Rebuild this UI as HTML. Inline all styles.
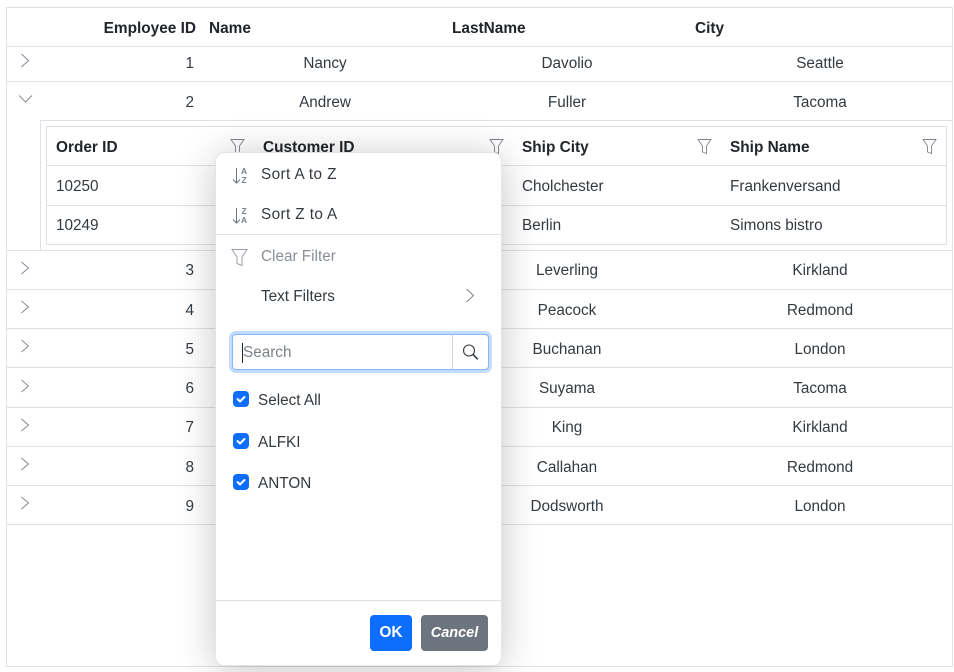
<!DOCTYPE html>
<html><head><meta charset="utf-8">
<style>
html,body{margin:0;padding:0;background:#fff}
body{width:954px;height:672px;position:relative;overflow:hidden;font-family:"Liberation Sans",sans-serif;font-size:15.3px;color:#333a40}
.t{position:absolute;white-space:nowrap;line-height:20px;height:20px;margin-top:1px}
.b{font-weight:bold;color:#212529;font-size:15.4px}
.c{transform:translateX(-50%)}
.r{transform:translateX(-100%)}
.h{position:absolute;height:1px;background:#dee2e6}
.v{position:absolute;width:1px;background:#dee2e6}
svg{position:absolute;overflow:visible}
#pop{position:absolute;left:216px;top:153px;width:285px;height:512px;background:#fff;border-radius:8px;box-shadow:0 0 0 1px #e3e5e8,0 4px 40px rgba(0,0,0,.24)}
.ck{position:absolute;left:233px;width:16px;height:16px;border-radius:4px;background:#0d6efd}
.ic{font-size:8.5px!important;line-height:8px!important;height:8px!important;font-weight:bold;color:#7a8188;margin:0}
</style></head><body>
<div style="position:absolute;left:6px;top:7px;width:947px;height:660px;border:1px solid #dee2e6;box-sizing:border-box"></div>
<div class="h" style="left:7px;width:945px;top:46px"></div>
<div class="h" style="left:7px;width:945px;top:81px"></div>
<div class="h" style="left:40px;width:912px;top:120px"></div>
<div class="h" style="left:7px;width:945px;top:250px"></div>
<div class="h" style="left:7px;width:945px;top:289px"></div>
<div class="h" style="left:7px;width:945px;top:328px"></div>
<div class="h" style="left:7px;width:945px;top:367px"></div>
<div class="h" style="left:7px;width:945px;top:407px"></div>
<div class="h" style="left:7px;width:945px;top:446px"></div>
<div class="h" style="left:7px;width:945px;top:485px"></div>
<div class="h" style="left:7px;width:945px;top:524px"></div>
<div class="v" style="left:40px;top:120px;height:130px"></div>
<div style="position:absolute;left:46px;top:126px;width:901px;height:119px;border:1px solid #dee2e6;box-sizing:border-box"></div>
<div class="h" style="left:47px;width:899px;top:165px"></div>
<div class="h" style="left:47px;width:899px;top:205px"></div>

<span class="t b r" style="left:196px;top:18px">Employee ID</span>
<span class="t b" style="left:209px;top:18px">Name</span>
<span class="t b" style="left:452px;top:18px">LastName</span>
<span class="t b" style="left:695px;top:18px">City</span>

<span class="t r" style="left:194px;top:53px">1</span><span class="t c" style="left:325px;top:53px">Nancy</span><span class="t c" style="left:567px;top:53px">Davolio</span><span class="t c" style="left:820px;top:53px">Seattle</span>
<span class="t r" style="left:194px;top:92px">2</span><span class="t c" style="left:325px;top:92px">Andrew</span><span class="t c" style="left:567px;top:92px">Fuller</span><span class="t c" style="left:820px;top:92px">Tacoma</span>
<span class="t r" style="left:194px;top:260px">3</span><span class="t c" style="left:567px;top:260px">Leverling</span><span class="t c" style="left:820px;top:260px">Kirkland</span>
<span class="t r" style="left:194px;top:300px">4</span><span class="t c" style="left:567px;top:300px">Peacock</span><span class="t c" style="left:820px;top:300px">Redmond</span>
<span class="t r" style="left:194px;top:339px">5</span><span class="t c" style="left:567px;top:339px">Buchanan</span><span class="t c" style="left:820px;top:339px">London</span>
<span class="t r" style="left:194px;top:378px">6</span><span class="t c" style="left:567px;top:378px">Suyama</span><span class="t c" style="left:820px;top:378px">Tacoma</span>
<span class="t r" style="left:194px;top:417px">7</span><span class="t c" style="left:567px;top:417px">King</span><span class="t c" style="left:820px;top:417px">Kirkland</span>
<span class="t r" style="left:194px;top:457px">8</span><span class="t c" style="left:567px;top:457px">Callahan</span><span class="t c" style="left:820px;top:457px">Redmond</span>
<span class="t r" style="left:194px;top:496px">9</span><span class="t c" style="left:567px;top:496px">Dodsworth</span><span class="t c" style="left:820px;top:496px">London</span>

<svg style="left:0;top:0" width="954" height="672" fill="none" stroke="#7d848b" stroke-width="0.9">
<path d="M21.500 54l7 6.500-7 6.500"/>
<path d="M19 95.500l6.500 6.500 6.500-6.500"/>
<path d="M21.500 262l7 6-7 6"/>
<path d="M21.500 301l7 6-7 6"/>
<path d="M21.500 340l7 6-7 6"/>
<path d="M21.500 380l7 6-7 6"/>
<path d="M21.500 419l7 6-7 6"/>
<path d="M21.500 458l7 6-7 6"/>
<path d="M21.500 497l7 6-7 6"/>
<path d="M231 139.500h13l-4.500 6.500v7.500l-4-1.500v-6z"/>
<path d="M490 139.500h13l-4.500 6.500v7.500l-4-1.500v-6z"/>
<path d="M698 139.500h13l-4.500 6.500v7.500l-4-1.500v-6z"/>
<path d="M923 139.500h13l-4.500 6.500v7.500l-4-1.500v-6z"/>
</svg>

<span class="t b" style="left:56px;top:137px">Order ID</span>
<span class="t b" style="left:263px;top:137px">Customer ID</span>
<span class="t b" style="left:522px;top:137px">Ship City</span>
<span class="t b" style="left:730px;top:137px">Ship Name</span>
<span class="t" style="left:56px;top:176px">10250</span>
<span class="t" style="left:56px;top:215px">10249</span>
<span class="t" style="left:522px;top:176px">Cholchester</span>
<span class="t" style="left:522px;top:215px">Berlin</span>
<span class="t" style="left:730px;top:176px">Frankenversand</span>
<span class="t" style="left:730px;top:215px">Simons bistro</span>

<div id="pop"></div>
<div class="h" style="left:216px;width:285px;top:234px"></div>
<div class="h" style="left:216px;width:285px;top:600px"></div>
<span class="t" style="left:261px;top:164px;letter-spacing:.4px">Sort A to Z</span>
<span class="t" style="left:261px;top:204px;letter-spacing:.4px">Sort Z to A</span>
<span class="t" style="left:261px;top:246px;color:#8a9097">Clear Filter</span>
<span class="t" style="left:261px;top:286px">Text Filters</span>

<svg style="left:0;top:0" width="954" height="672" fill="none" stroke="#6c757d" stroke-width="1">
<path d="M236.500 168v15M233 179.500l3.500 3.500 3.500-3.500"/>
<path d="M236.500 208v15M233 219.500l3.500 3.500 3.500-3.500"/>
<path d="M232 249.500h15l-5 7.500v8.500l-5-2v-6.500z" stroke="#9aa0a6"/>
<path d="M466.500 289l7 6.500-7 6.500" stroke="#7d848b"/>
</svg>
<span class="t ic" style="left:241px;top:167px">A</span>
<span class="t ic" style="left:241.500px;top:176px">Z</span>
<span class="t ic" style="left:241.500px;top:207px">Z</span>
<span class="t ic" style="left:241px;top:216px">A</span>

<div style="position:absolute;left:232px;top:334px;width:257px;height:36px;box-sizing:border-box;background:#fff;border:1px solid #86b7fe;border-radius:4px;box-shadow:0 0 0 3px #c2dbfe"></div>
<div class="v" style="left:452px;top:335px;height:34px;background:#ced4da"></div>
<div style="position:absolute;left:242px;top:343px;width:1px;height:20px;background:#212529"></div>
<span class="t" style="left:243px;top:342px;color:#7b8289">Search</span>
<svg style="left:0;top:0" width="954" height="672" fill="none" stroke="#333a40" stroke-width="1.100">
<circle cx="469" cy="350.500" r="5.500"/><path d="M473 354.500l4.800 4.800" stroke-width="1.600"/>
</svg>

<div class="ck" style="top:391px"></div>
<div class="ck" style="top:433px"></div>
<div class="ck" style="top:474px"></div>
<svg style="left:0;top:0" width="954" height="672" fill="none" stroke="#fff" stroke-width="2" stroke-linecap="round" stroke-linejoin="round">
<path d="M237.500 399l2.500 2.500 4.500-4.500"/>
<path d="M237.500 441l2.500 2.500 4.500-4.500"/>
<path d="M237.500 482l2.500 2.500 4.500-4.500"/>
</svg>
<span class="t" style="left:258px;top:390px">Select All</span>
<span class="t" style="left:258px;top:432px">ALFKI</span>
<span class="t" style="left:258px;top:473px">ANTON</span>

<div style="position:absolute;left:370px;top:615px;width:42px;height:36px;background:#0d6efd;border-radius:4px;color:#fff;font-weight:bold;font-size:15.5px;line-height:35px;text-align:center">OK</div>
<div style="position:absolute;left:421px;top:615px;width:67px;height:36px;background:#6c757d;border-radius:4px;color:#fff;font-weight:bold;font-style:italic;font-size:14.5px;line-height:36px;text-align:center">Cancel</div>
</body></html>
